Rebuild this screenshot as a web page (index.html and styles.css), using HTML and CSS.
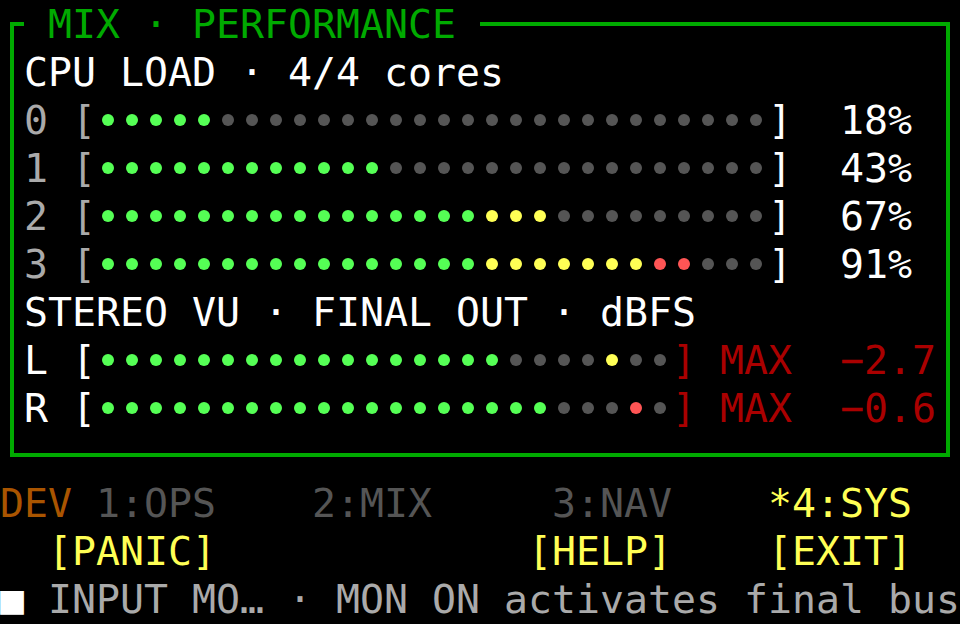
FILE: index.html
```html
<!DOCTYPE html>
<html>
<head>
<meta charset="utf-8">
<link rel="stylesheet" href="styles.css">
</head>
<body>
<fieldset class="panel">
<legend class="title"> MIX · PERFORMANCE </legend>
<div class="row">CPU LOAD · 4/4 cores</div>
<div class="row"><span class="dim">0 [</span><span class="bar"><i class="g"></i><i class="g"></i><i class="g"></i><i class="g"></i><i class="g"></i><i class="o"></i><i class="o"></i><i class="o"></i><i class="o"></i><i class="o"></i><i class="o"></i><i class="o"></i><i class="o"></i><i class="o"></i><i class="o"></i><i class="o"></i><i class="o"></i><i class="o"></i><i class="o"></i><i class="o"></i><i class="o"></i><i class="o"></i><i class="o"></i><i class="o"></i><i class="o"></i><i class="o"></i><i class="o"></i><i class="o"></i></span><span>]  18%</span></div>
<div class="row"><span class="dim">1 [</span><span class="bar"><i class="g"></i><i class="g"></i><i class="g"></i><i class="g"></i><i class="g"></i><i class="g"></i><i class="g"></i><i class="g"></i><i class="g"></i><i class="g"></i><i class="g"></i><i class="g"></i><i class="o"></i><i class="o"></i><i class="o"></i><i class="o"></i><i class="o"></i><i class="o"></i><i class="o"></i><i class="o"></i><i class="o"></i><i class="o"></i><i class="o"></i><i class="o"></i><i class="o"></i><i class="o"></i><i class="o"></i><i class="o"></i></span><span>]  43%</span></div>
<div class="row"><span class="dim">2 [</span><span class="bar"><i class="g"></i><i class="g"></i><i class="g"></i><i class="g"></i><i class="g"></i><i class="g"></i><i class="g"></i><i class="g"></i><i class="g"></i><i class="g"></i><i class="g"></i><i class="g"></i><i class="g"></i><i class="g"></i><i class="g"></i><i class="g"></i><i class="y"></i><i class="y"></i><i class="y"></i><i class="o"></i><i class="o"></i><i class="o"></i><i class="o"></i><i class="o"></i><i class="o"></i><i class="o"></i><i class="o"></i><i class="o"></i></span><span>]  67%</span></div>
<div class="row"><span class="dim">3 [</span><span class="bar"><i class="g"></i><i class="g"></i><i class="g"></i><i class="g"></i><i class="g"></i><i class="g"></i><i class="g"></i><i class="g"></i><i class="g"></i><i class="g"></i><i class="g"></i><i class="g"></i><i class="g"></i><i class="g"></i><i class="g"></i><i class="g"></i><i class="y"></i><i class="y"></i><i class="y"></i><i class="y"></i><i class="y"></i><i class="y"></i><i class="y"></i><i class="r"></i><i class="r"></i><i class="o"></i><i class="o"></i><i class="o"></i></span><span>]  91%</span></div>
<div class="row">STEREO VU · FINAL OUT · dBFS</div>
<div class="row"><span>L [</span><span class="bar"><i class="g"></i><i class="g"></i><i class="g"></i><i class="g"></i><i class="g"></i><i class="g"></i><i class="g"></i><i class="g"></i><i class="g"></i><i class="g"></i><i class="g"></i><i class="g"></i><i class="g"></i><i class="g"></i><i class="g"></i><i class="g"></i><i class="g"></i><i class="o"></i><i class="o"></i><i class="o"></i><i class="o"></i><i class="y"></i><i class="o"></i><i class="o"></i></span><span class="max">] MAX  −2.7</span></div>
<div class="row"><span>R [</span><span class="bar"><i class="g"></i><i class="g"></i><i class="g"></i><i class="g"></i><i class="g"></i><i class="g"></i><i class="g"></i><i class="g"></i><i class="g"></i><i class="g"></i><i class="g"></i><i class="g"></i><i class="g"></i><i class="g"></i><i class="g"></i><i class="g"></i><i class="g"></i><i class="g"></i><i class="g"></i><i class="o"></i><i class="o"></i><i class="o"></i><i class="r"></i><i class="o"></i></span><span class="max">] MAX  −0.6</span></div>
</fieldset>
<div class="row tabs"><span class="dev">DEV</span> <span class="tab">1:OPS</span>    <span class="tab">2:MIX</span>     <span class="tab">3:NAV</span>    <span class="active">*4:SYS</span></div>
<div class="row keys">  [PANIC]             [HELP]    [EXIT]</div>
<div class="row status"><span class="mark">■</span> INPUT MO… · MON ON activates final bus</div>
</body>
</html>
```
FILE: styles.css
```css
html, body {
  margin: 0;
  padding: 0;
  background: #000;
}
body {
  width: 960px;
  height: 624px;
  overflow: hidden;
  font-family: "DejaVu Sans Mono", monospace;
  font-size: 39.864px;
  line-height: 48px;
  color: #ffffff;
}
.panel {
  margin: 0 10px 22px 10px;
  border: 4px solid #00aa00;
  padding: 0 10px 21px 10px;
  min-width: 0;
}
.title {
  padding: 0;
  height: 48px;
  line-height: 48px;
  color: #00aa00;
  white-space: pre;
}
.row {
  display: block;
  height: 48px;
  white-space: pre;
}
.dim {
  color: #aaaaaa;
}
.bar {
  display: inline-flex;
  vertical-align: top;
  height: 48px;
}
.bar i {
  display: block;
  width: 24px;
  height: 48px;
}
.bar i::before {
  content: "";
  display: block;
  width: 12px;
  height: 12px;
  margin: 18px 6px;
  border-radius: 50%;
  background: currentColor;
}
.g { color: #55ff55; }
.y { color: #ffff55; }
.r { color: #ff5555; }
.o { color: #555555; }
.max {
  color: #aa0000;
}
.dev {
  color: #aa5500;
}
.tab {
  color: #555555;
}
.active {
  color: #ffff55;
}
.keys {
  color: #ffff55;
}
.status {
  color: #aaaaaa;
}
.mark {
  color: #ffffff;
}
```
